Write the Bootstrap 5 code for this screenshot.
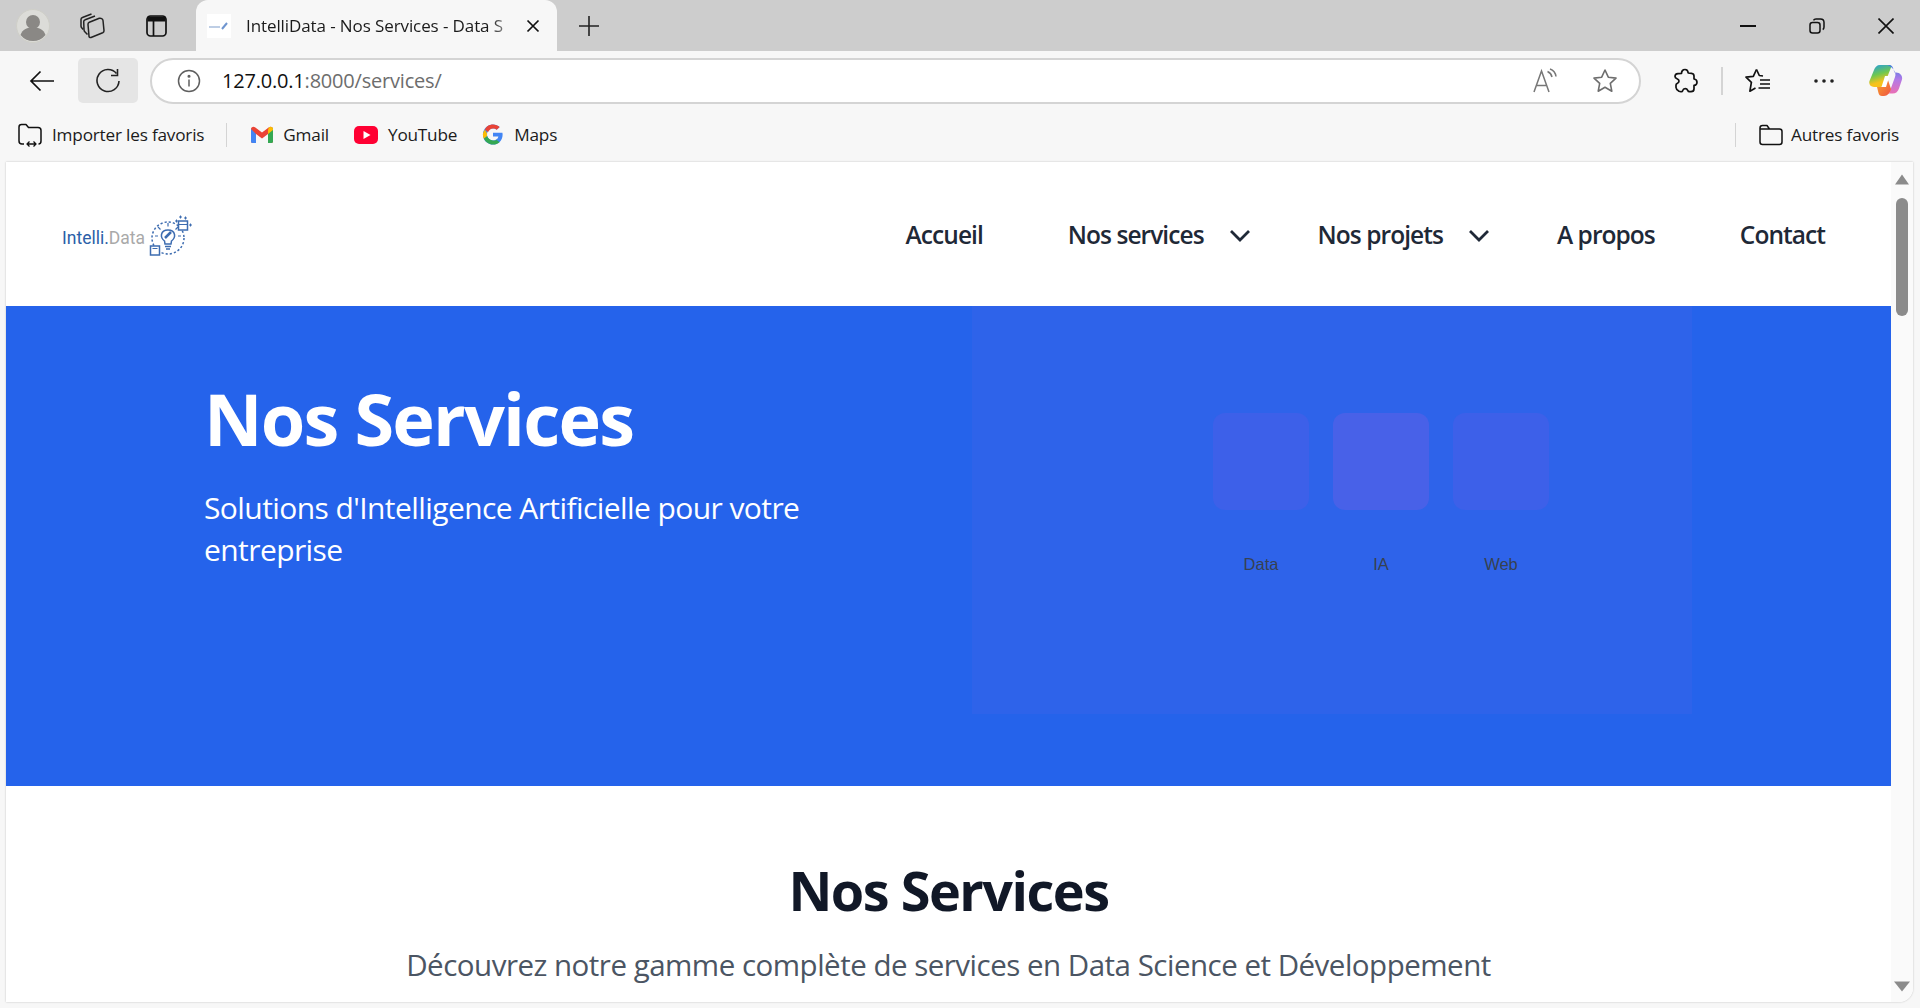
<!DOCTYPE html>
<html lang="fr">
<head>
  <meta charset="UTF-8">
  <title>IntelliData - Nos Services</title>
  <link href="https://cdn.jsdelivr.net/npm/bootstrap@5.3.3/dist/css/bootstrap.min.css" rel="stylesheet">
  <style>
    html, body { height: 1008px; overflow: hidden; }
    body { background: #f7f7f7; font-family: "Open Sans", "Noto Sans", sans-serif; color: #1b1b1b; }
    svg { display: block; flex: none; }

    .tab-strip { height: 51px; background: #cdcdcd; }
    .strip-icon { height: 51px; }
    .strip-first { width: 66px; }
    .strip-coll { width: 54px; }
    .strip-tabs { width: 72px; }
    .browser-tab { width: 361px; height: 51px; margin-left: 4px; background: #f7f7f7; border-radius: 12px 12px 0 0; padding: 0 14px 0 11px; font-size: 17px; letter-spacing: -.1px; }
    .tab-favicon { width: 24px; height: 24px; background: #fff; margin-right: 15px; }
    .tab-title { width: 272px; white-space: nowrap; -webkit-mask-image: linear-gradient(90deg, #000 90%, transparent); mask-image: linear-gradient(90deg, #000 90%, transparent); }
    .tab-plus { margin-left: 21px; }
    .win-btn { width: 69px; height: 51px; }

    .tool-row { height: 57px; padding: 2px 0 0 29px; }
    .back-btn { width: 37px; margin-right: 12px; }
    .reload-btn { width: 60px; height: 45px; background: #e5e5e5; border-radius: 5px; margin-right: 12px; }
    .addr-bar { width: 1491px; height: 46px; background: #fff; border: 2px solid #d4d4d4; border-radius: 23px; padding-left: 25px; }
    .addr-text { margin-left: 21px; font-size: 20px; letter-spacing: -.2px; color: #6d6d6d; padding-top: 1px; }
    .addr-host { color: #111; }
    .addr-right { margin-left: auto; gap: 33px; padding-right: 21px; }
    .tool-ext { margin-left: 33px; }
    .tool-sep { width: 2px; height: 28px; background: #d4d4d4; margin: 0 22px 0 23px; }
    .tool-dots { margin-left: 43px; }
    .tool-copilot { margin-left: 35px; }

    .fav-row { height: 54px; padding-left: 18px; font-size: 17.2px; letter-spacing: -.2px; white-space: nowrap; }
    .fav-sep { width: 1px; height: 24px; background: #d4d4d4; }
    .fav-import { margin-left: 10px; }
    .fav-first { margin-left: 22px; margin-right: 24px; }
    .fav-item { gap: 10px; margin-right: 25px; }
    .fav-end { margin-left: auto; padding-right: 21px; }
    .fav-end .fav-sep { margin-right: 23px; }

    .page-frame { height: 840px; margin: 0 7px 0 6px; background: #fff; border-radius: 0 0 14px 0; box-shadow: 0 0 2px rgba(0,0,0,.25); overflow: hidden; }
    .page-main { flex: 1; min-width: 0; }
    .scroll-rail { width: 22px; background: #fafafa; padding-top: 12px; }
    .scroll-thumb { width: 12px; height: 118px; background: #8b8b8b; border-radius: 6px; margin: 13px 0 0 5px; }
    .scroll-down { margin: 0 0 0 3px; position: absolute; bottom: 10px; }

    .site-nav { height: 144px; padding: 2px 66px 0 53px; }
    .site-logo { margin-top: 8px; }
    .site-links { font-size: 24.5px; font-weight: 600; color: #1f2937; letter-spacing: -.95px; white-space: nowrap; }
    .site-links a { color: inherit; text-decoration: none; }
    .nav-gap-wide { margin-right: 85px; }
    .nav-chev { margin: 0 67px 0 25px; }

    .hero-band { height: 480px; background: #2563eb; color: #fff; }
    .hero-inner { width: 1536px; margin-left: 174px; padding: 0 24px; display: grid; grid-template-columns: 720px 720px; column-gap: 48px; }
    .hero-copy { padding-top: 69px; }
    .hero-copy h1 { font-size: 72px; line-height: 1.2; font-weight: 700; letter-spacing: -1.8px; margin: 0 0 26px; }
    .hero-copy p { font-size: 30px; line-height: 42px; margin: 0; letter-spacing: -.58px; width: 640px; }

    .services-head { padding-top: 72px; text-align: center; }
    .services-head h2 { font-size: 54px; line-height: 1.2; font-weight: 700; color: #111827; letter-spacing: -1.5px; margin: 0 0 21px; }
    .services-head p { font-size: 29.5px; line-height: 42px; color: #4b5563; letter-spacing: -.5px; margin: 0; white-space: nowrap; }
  </style>
</head>
<body>

<div class="tab-strip d-flex align-items-center">
  <div class="strip-icon strip-first d-flex align-items-center justify-content-center">
    <svg width="34" height="34" viewBox="0 0 34 34"><circle cx="17" cy="17" r="16.500" fill="#dcdcd8" stroke="#cfcfc8"/><circle cx="17" cy="13" r="7" fill="#8a8885"/><path d="M4.500 26c2-6 7-7.500 12.500-7.500s10.500 1.500 12.500 7.500a16 16 0 0 1-25 0z" fill="#8a8885"/></svg>
  </div>
  <div class="strip-icon strip-coll d-flex align-items-center justify-content-center">
    <svg width="26" height="26" viewBox="0 0 26 26" fill="none" stroke="#222" stroke-width="1.500" stroke-linejoin="round"><path d="M11 24.500c-1 .3-1.800-.2-2-1.200L8 11.500c-.1-1 .4-1.800 1.300-2.200l10-4c1.500-.5 3.500.5 3.700 2.200l1 10c.1 1-.4 1.900-1.300 2.300z"/><path d="M7.500 21.500 4.800 18.800c-.5-.5-.8-1.200-.8-2l-.3-8c0-1 .6-1.800 1.500-2.100L15 3"/><path d="M3.200 16.500 1.500 14.500C1.200 14 1 13.500 1 13V6.500c0-1 .5-1.700 1.400-2L11.500 1"/></svg>
  </div>
  <div class="strip-icon strip-tabs d-flex align-items-center justify-content-center">
    <svg width="21" height="22" viewBox="0 0 21 22" fill="none" stroke="#111" stroke-width="1.700"><rect x="1" y="1" width="19" height="20" rx="3.500"/><path d="M1.500 4h18" stroke-width="5"/><path d="M7.500 5v16"/></svg>
  </div>
  <div class="browser-tab d-flex align-items-center">
    <div class="tab-favicon d-flex align-items-center justify-content-center">
      <svg width="22" height="12" viewBox="0 0 22 12"><path d="M1 7h11" stroke="#a9bedd" stroke-width="1.500"/><path d="M14 9l5-6" stroke="#6f95cf" stroke-width="2"/></svg>
    </div>
    <span class="tab-title">IntelliData - Nos Services - Data S</span>
    <svg class="ms-2" width="14" height="14" viewBox="0 0 14 14" stroke="#111" stroke-width="1.700"><path d="M1.500 1.500l11 11M12.500 1.500l-11 11"/></svg>
  </div>
  <svg class="tab-plus" width="22" height="22" viewBox="0 0 22 22" stroke="#222" stroke-width="1.600"><path d="M11 1v20M1 11h20"/></svg>
  <div class="d-flex ms-auto">
    <div class="win-btn d-flex align-items-center justify-content-center"><svg width="16" height="2" viewBox="0 0 16 2"><path d="M0 1h16" stroke="#111" stroke-width="2"/></svg></div>
    <div class="win-btn d-flex align-items-center justify-content-center"><svg width="16" height="16" viewBox="0 0 16 16" fill="none" stroke="#111" stroke-width="1.500"><rect x="1" y="4.500" width="10" height="10.500" rx="2.500"/><path d="M4.500 2.300C5 1.300 6 1 7 1h4.500C13.500 1 15 2.500 15 4.500V9c0 1-.4 2-1.300 2.500"/></svg></div>
    <div class="win-btn d-flex align-items-center justify-content-center"><svg width="16" height="16" viewBox="0 0 16 16" stroke="#111" stroke-width="1.600"><path d="M.5.500l15 15M15.500.500l-15 15"/></svg></div>
  </div>
</div>

<div class="tool-row d-flex align-items-center">
  <div class="back-btn">
    <svg width="26" height="22" viewBox="0 0 26 22" fill="none" stroke="#111" stroke-width="1.700"><path d="M25 11H2M11.500 1.500 2 11l9.500 9.500"/></svg>
  </div>
  <div class="reload-btn d-flex align-items-center justify-content-center">
    <svg width="26" height="26" viewBox="0 0 26 26" fill="none" stroke="#222" stroke-width="1.600"><path d="M21.500 5.500A11 11 0 1 0 24 13"/><path d="M22.500 1v6.500H16"/></svg>
  </div>
  <div class="addr-bar d-flex align-items-center">
    <svg width="24" height="24" viewBox="0 0 24 24" fill="none" stroke="#5f5f5f" stroke-width="1.500"><circle cx="12" cy="12" r="10.500"/><path d="M12 10.500v7"/><circle cx="12" cy="7.300" r=".8" fill="#5f5f5f"/></svg>
    <span class="addr-text"><span class="addr-host">127.0.0.1</span>:8000/services/</span>
    <div class="addr-right d-flex align-items-center">
      <svg width="26" height="26" viewBox="0 0 26 26" fill="none" stroke="#777" stroke-width="1.500"><path d="M1 24 8.500 3l7.500 21M3.500 17.500h10"/><path d="M14.500 3.500c2.500 1 4 3 4.500 5.500M17 1c3.500 1.200 5.500 4 6 7.500"/></svg>
      <svg width="26" height="26" viewBox="0 0 26 26" fill="none" stroke="#6e6e6e" stroke-width="1.600" stroke-linejoin="round"><path d="M13 2l3.300 7.200 7.700.9-5.700 5.300 1.500 7.800L13 19.300 6.200 23.200l1.500-7.800L2 10.100l7.700-.9z"/></svg>
    </div>
  </div>
  <svg class="tool-ext" width="24" height="26" viewBox="0 0 24 26" fill="none" stroke="#111" stroke-width="1.700" stroke-linejoin="round"><path d="M7.500 5.500c0-2.500 1.500-4 3.500-4 1.800 0 3 1.200 3.200 3.500l3.300.3c1.500.2 2.500 1.200 2.500 2.700v3c2 .2 3 1.500 3 3.200 0 1.800-1.200 3-3 3.200v3.300c0 1.800-1 3-3 3h-1.500c-.8 0-1.500-.5-1.800-1.300-.5-1.200-1.200-1.700-2.500-1.700s-2.200.7-2.500 1.900c-.3.800-1 1.300-1.800 1.100l-1.900-.5C3 22 2 21 2 19.500V17c0-1 .8-1.500 1.500-1.800 1-.4 1.500-1.200 1.500-2.200s-.7-1.800-2-2.300C2 10.300 1 9.500 1 8.500 1 6.800 2.500 5.700 4 5.600z"/></svg>
  <div class="tool-sep"></div>
  <svg width="26" height="25" viewBox="0 0 26 25" fill="none" stroke="#111" stroke-width="1.700" stroke-linejoin="round"><path d="M11.500 1.500 8.300 8.300 1 9.200l5.400 5.200-1.500 8.800 5.600-3.200"/><path d="M11.500 1.500l2.800 6 3.700.5"/><path d="M15 12h10M15 16h10M13.500 20h11.500"/></svg>
  <svg class="tool-dots" width="20" height="4" viewBox="0 0 20 4" fill="#222"><circle cx="2" cy="2" r="1.800"/><circle cx="10" cy="2" r="1.800"/><circle cx="18" cy="2" r="1.800"/></svg>
  <svg class="tool-copilot" width="34" height="31" viewBox="0 0 34 31">
    <defs>
      <linearGradient id="copA" x1="0" y1="0" x2=".3" y2="1"><stop offset="0" stop-color="#1e9be8"/><stop offset=".5" stop-color="#6fc84f"/><stop offset=".85" stop-color="#f7c21a"/></linearGradient>
      <linearGradient id="copB" x1=".5" y1="0" x2=".5" y2="1"><stop offset="0" stop-color="#3f7be0"/><stop offset=".5" stop-color="#b07ae8"/><stop offset="1" stop-color="#ea6fb5"/></linearGradient>
      <linearGradient id="copC" x1="0" y1="0" x2="1" y2="1"><stop offset="0" stop-color="#f9a825"/><stop offset="1" stop-color="#ef5344"/></linearGradient>
    </defs>
    <path d="M11 0h9c2 0 2.500 1 2 2.500L16 18c-1 2.500-2.500 4-5 4H5c-3.500 0-5.500-3-4.500-6L5 5c1-3 3-5 6-5z" fill="url(#copA)"/>
    <path d="M18.500 0h1.500c2 0 3.500 1 4 3l1.500 4.500h1.500c4 0 7 3.500 6 7l-3 9c-1 3-3 5-6.500 5H20l6-16.500C27.500 8 25 3 18.500 0z" fill="url(#copB)"/>
    <path d="M8 22h4c2.500 0 4-1.500 5-3.500l1.500-5L22 24c-1 4-3.500 7-7 7h-2c-2 0-3-1-3.500-3z" fill="url(#copC)"/>
    <path d="M16 11h4.500L17 22h-4.500z" fill="#fff"/>
  </svg>
</div>

<div class="fav-row d-flex align-items-center">
  <svg width="24" height="24" viewBox="0 0 24 24" fill="none" stroke="#111" stroke-width="1.500" stroke-linejoin="round"><path d="M6 21H4c-1.500 0-3-1.200-3-3V4c0-1.500 1-2.500 2.500-2.500H8l2.500 3H20c1.800 0 3 1.200 3 3V18c0 1.800-1 3-2.500 3"/><path d="M9 21h9M11.500 18.500 9 21l2.500 2.500M15.500 18.500 18 21l-2.500 2.500" stroke-width="1.300"/></svg>
  <span class="fav-import">Importer les favoris</span>
  <div class="fav-sep fav-first"></div>
  <div class="fav-item d-flex align-items-center">
    <svg width="22" height="18" viewBox="0 0 22 18"><path d="M1.500 17H5V8l6 4.500L17 8v9h3.500c.8 0 1.500-.7 1.500-1.500V3c0-2-2.300-3-4-1.800L11 6.500 4 1.200C2.300 0 0 1 0 3v12.500C0 16.300.7 17 1.500 17z" fill="#ea4335"/><path d="M0 3v12.500C0 16.300.7 17 1.500 17H5V8z" fill="#4285f4"/><path d="M17 8v9h3.500c.8 0 1.500-.7 1.500-1.500V3c0-.6-.2-1.100-.5-1.500z" fill="#34a853"/><path d="M17 3.800V8l5-4V3c0-2-2.300-3-4-1.800z" fill="#fbbc04"/></svg>
    <span>Gmail</span>
  </div>
  <div class="fav-item d-flex align-items-center">
    <svg width="24" height="18" viewBox="0 0 24 18"><rect width="24" height="18" rx="5" fill="#ff0033"/><path d="M9.500 5v8l7-4z" fill="#fff"/></svg>
    <span>YouTube</span>
  </div>
  <div class="fav-item d-flex align-items-center">
    <svg width="22" height="23" viewBox="0 0 48 48"><path d="M44.500 20H24v8.500h11.800C34.700 33.900 30.100 37 24 37c-7.200 0-13-5.800-13-13s5.800-13 13-13c3.100 0 5.900 1.100 8.100 2.900l6.400-6.400C34.600 4.100 29.600 2 24 2 11.800 2 2 11.800 2 24s9.800 22 22 22c11 0 21-8 21-22 0-1.300-.2-2.700-.5-4z" fill="#4285f4"/><path d="M6.300 13.700l7 5.100C15.200 14.400 19.200 11 24 11c3.100 0 5.900 1.100 8.100 2.900l6.400-6.400C34.600 4.100 29.600 2 24 2 15.500 2 8.200 6.800 6.300 13.700z" fill="#ea4335"/><path d="M24 46c5.500 0 10.400-1.900 14.200-5.100l-6.500-5.500C29.600 36.900 27 37 24 37c-6 0-11.100-4-12.900-9.500l-7 5.400C7.600 40.800 15.300 46 24 46z" fill="#34a853"/><path d="M6.300 13.700C4 17 2 20 2 24s1 7.500 2.100 8.900l7-5.400C10.700 26.400 11 25.200 11 24s-.3-2.700-.7-3.900z" fill="#fbbc05"/></svg>
    <span>Maps</span>
  </div>
  <div class="fav-end d-flex align-items-center">
    <div class="fav-sep"></div>
    <svg width="24" height="22" viewBox="0 0 24 22" fill="none" stroke="#111" stroke-width="1.500" stroke-linejoin="round"><path d="M1 4c0-1.500 1-2.500 2.500-2.500h4.500L10.500 5H20.500c1.500 0 2.500 1 2.500 2.500V18c0 1.500-1 2.500-2.500 2.500h-17C2 20.500 1 19.500 1 18zM1 5h9.500"/></svg>
    <span class="ms-2">Autres favoris</span>
  </div>
</div>

<div class="page-frame d-flex">
  <div class="page-main">
    <nav class="site-nav d-flex align-items-center justify-content-between">
      <svg class="site-logo" width="140" height="50" viewBox="0 0 140 50" fill="none">
        <text x="3" y="30" font-family="Roboto, sans-serif" font-size="17.500" fill="#2b5fa8">Intelli.<tspan fill="#a9a9a9">Data</tspan></text>
        <circle cx="109" cy="24" r="16" stroke="#3d6cb0" stroke-width="1.500" stroke-dasharray="2.200 2"/>
        <path d="M105.500 27c-2.500-2-3.500-4-3-6.500.6-3 3.300-4.500 6.500-4.500s5.900 1.500 6.500 4.500c.5 2.500-.5 4.500-3 6.500l-.5 3h-6z" fill="#fff" stroke="#3d6cb0" stroke-width="1.500"/>
        <path d="M106 32.500h6M107 35h4" stroke="#3d6cb0" stroke-width="1.700"/>
        <path d="M106 24l6-6" stroke="#3d6cb0" stroke-width="2.500"/>
        <path d="M99 13l2.500 2.500M96 22h3M119 22h3M119 13l-2.500 2.500M109 9v3.500" stroke="#3d6cb0" stroke-width="1.200"/>
        <rect x="119.500" y="7" width="9" height="9" fill="#fff" stroke="#3d6cb0" stroke-width="1.500"/>
        <rect x="91.500" y="32" width="9" height="9" fill="#fff" stroke="#3d6cb0" stroke-width="1.500"/>
        <path d="M119.500 10.500h9" stroke="#3d6cb0" stroke-width="1"/>
        <path d="M93.500 34.500h5" stroke="#3d6cb0" stroke-width="1"/>
        <path d="M116 7h3M117.500 5.500v3M120 3h3M121.500 1.500v3M125 4h3M126.500 2.500v3M130 11h3M131.500 9.500v3" stroke="#3d6cb0" stroke-width="1"/>
      </svg>
      <div class="site-links d-flex align-items-center">
        <a href="#" class="nav-gap-wide">Accueil</a>
        <a href="#">Nos services</a>
        <svg class="nav-chev" width="22" height="13" viewBox="0 0 22 13" fill="none" stroke="#1f2937" stroke-width="2.800"><path d="M2 2l9 9 9-9"/></svg>
        <a href="#">Nos projets</a>
        <svg class="nav-chev" width="22" height="13" viewBox="0 0 22 13" fill="none" stroke="#1f2937" stroke-width="2.800"><path d="M2 2l9 9 9-9"/></svg>
        <a href="#" class="nav-gap-wide">A propos</a>
        <a href="#">Contact</a>
      </div>
    </nav>

    <section class="hero-band">
      <div class="hero-inner">
        <div class="hero-copy">
          <h1>Nos Services</h1>
          <p>Solutions d'Intelligence Artificielle pour votre entreprise</p>
        </div>
        <svg width="720" height="408" viewBox="0 0 720 408">
          <rect width="720" height="408" fill="#2e63ea"/>
          <rect x="241" y="107" width="96" height="97" rx="12" fill="#3d60e9"/>
          <rect x="361" y="107" width="96" height="97" rx="12" fill="#4861e8"/>
          <rect x="481" y="107" width="96" height="97" rx="12" fill="#3d60e9"/>
          <g font-family="Liberation Sans, sans-serif" font-size="16.500" fill="#374151" text-anchor="middle">
            <text x="289" y="264">Data</text>
            <text x="409" y="264">IA</text>
            <text x="529" y="264">Web</text>
          </g>
        </svg>
      </div>
    </section>

    <section class="services-head">
      <h2>Nos Services</h2>
      <p>Découvrez notre gamme complète de services en Data Science et Développement</p>
    </section>
  </div>
  <div class="scroll-rail position-relative">
    <svg class="ms-1" width="14" height="11" viewBox="0 0 14 11" fill="#8b8b8b"><path d="M7 .5 14 10.500H0z"/></svg>
    <div class="scroll-thumb"></div>
    <svg class="scroll-down" width="16" height="11" viewBox="0 0 16 11" fill="#8b8b8b"><path d="M0 .5h16L8 10.500z"/></svg>
  </div>
</div>

<script src="https://cdn.jsdelivr.net/npm/bootstrap@5.3.3/dist/js/bootstrap.bundle.min.js"></script>
</body>
</html>
